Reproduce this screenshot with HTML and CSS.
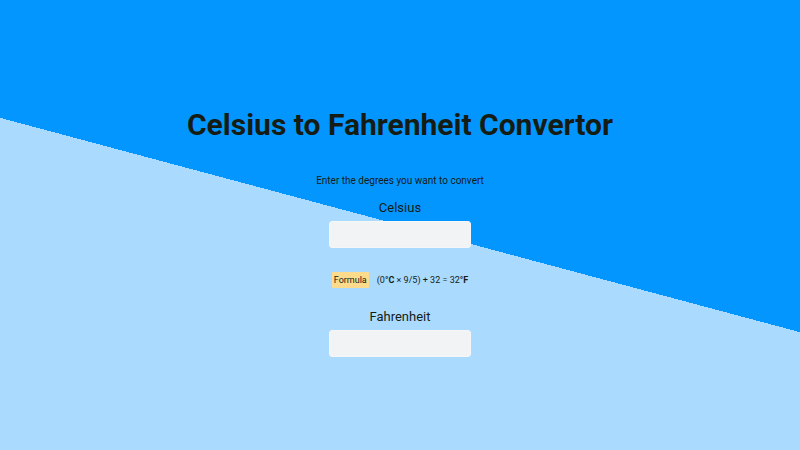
FILE: index.html
```html
<!DOCTYPE html>
<html lang="en">
<head>
<meta charset="utf-8">
<meta name="viewport" content="width=device-width, initial-scale=1">
<title>Celsius to Fahrenheit Convertor</title>
<link rel="stylesheet" href="styles.css">
</head>
<body>
<main class="converter">
  <h1 class="title">Celsius to Fahrenheit Convertor</h1>
  <p class="hint">Enter the degrees you want to convert</p>
  <form class="form">
    <label class="label" for="celsius">Celsius</label>
    <input class="field" id="celsius" type="text">
    <p class="formula"><span class="tag">Formula</span><span>(0<b>°C</b> × 9/5) + 32 = 32<b>°F</b></span></p>
    <label class="label" for="fahrenheit">Fahrenheit</label>
    <input class="field" id="fahrenheit" type="text">
  </form>
</main>
</body>
</html>
```
FILE: styles.css
```css
* {
  box-sizing: border-box;
}

body {
  margin: 0;
  min-height: 100vh;
  display: flex;
  flex-direction: column;
  align-items: center;
  justify-content: center;
  font-family: Roboto, sans-serif;
  color: #141c14;
  background: linear-gradient(195deg, #0496ff 50%, #abdaff 50%);
}

.converter,
.form {
  display: flex;
  flex-direction: column;
  align-items: center;
}

.converter {
  padding-top: 14px;
}

.title {
  margin: 0 0 32px;
  font-size: 30px;
  line-height: 36px;
  text-align: center;
}

.hint {
  margin: 0 0 12px;
  font-size: 10px;
  line-height: 12px;
}

.label {
  margin-bottom: 4px;
  font-size: 13px;
  line-height: 18px;
}

.field {
  width: 142px;
  height: 27px;
  padding: 4px 8px;
  border: 1px solid #f4f6f8;
  border-radius: 3px;
  background: #f1f3f5;
  font: inherit;
  font-size: 13px;
  text-align: center;
}

.formula {
  display: flex;
  align-items: center;
  gap: 8px;
  margin: 24px 0 20px;
  font-size: 9px;
  line-height: 12px;
}

.tag {
  padding: 2px;
  border-radius: 1px;
  background: #fcdc8c;
}
```
